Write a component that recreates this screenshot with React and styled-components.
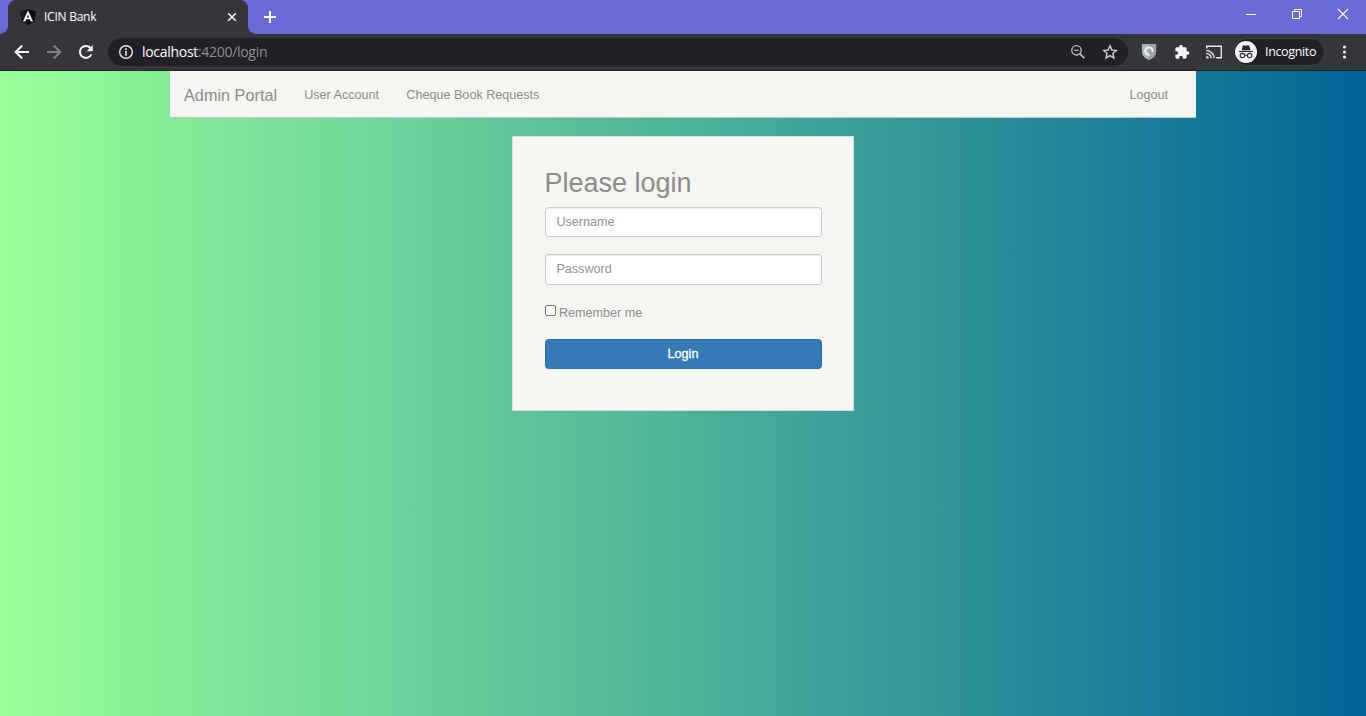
import React from "react";
import styled, { createGlobalStyle } from "styled-components";

const GlobalStyle = createGlobalStyle`
  * { box-sizing: border-box; }
  html, body { margin: 0; height: 100%; overflow: hidden; }
  body { font-family: "Liberation Sans", Arial, sans-serif; }
`;

const Window = styled.div`
  width: 1366px;
  height: 716px;
  display: flex;
  flex-direction: column;
  overflow: hidden;
`;

const TabStrip = styled.header`
  height: 34px;
  flex: none;
  display: flex;
  padding-left: 8px;
  background: #6b69d6;
  font-family: "Open Sans", "Noto Sans", sans-serif;
`;

const Tab = styled.div`
  position: relative;
  width: 240px;
  height: 34px;
  display: flex;
  align-items: center;
  padding: 0 10px 0 12px;
  border-radius: 8px 8px 0 0;
  background: #35363a;
  color: #fff;

  &::before,
  &::after {
    content: "";
    position: absolute;
    bottom: 0;
    width: 8px;
    height: 8px;
  }
  &::before {
    left: -8px;
    background: radial-gradient(circle at 0 0, transparent 7.5px, #35363a 8px);
  }
  &::after {
    right: -8px;
    background: radial-gradient(circle at 100% 0, transparent 7.5px, #35363a 8px);
  }
`;

const TabTitle = styled.span`
  flex: 1;
  margin-left: 8px;
  font-size: 12px;
  line-height: 16px;
  letter-spacing: -0.25px;
`;

const Icon = styled.svg`
  display: block;
  flex: none;
  width: ${(p) => p.$w || 16}px;
  height: ${(p) => p.$h || p.$w || 16}px;
`;

const NewTab = styled.div`
  display: flex;
  align-items: center;
  margin-left: 14px;
`;

const WindowControls = styled.div`
  display: flex;
  margin-left: auto;
`;

const Control = styled.div`
  width: 46px;
  height: 28px;
  display: flex;
  align-items: center;
  justify-content: center;
`;

const Toolbar = styled.div`
  height: 37px;
  flex: none;
  display: flex;
  align-items: center;
  padding: 0 12px 0 14px;
  background: #35363a;
  border-bottom: 1px solid #232326;
  font-family: "Open Sans", "Noto Sans", sans-serif;
`;

const NavIcons = styled.div`
  display: flex;
  gap: 16px;
  width: 94px;
`;

const AddressBar = styled.div`
  width: 1020px;
  height: 28px;
  display: flex;
  align-items: center;
  padding: 0 10px;
  border-radius: 14px;
  background: #202124;
`;

const Url = styled.span`
  flex: 1;
  margin-left: 8px;
  color: #8d9195;
  font-size: 14px;
  line-height: 20px;
  letter-spacing: -0.3px;
`;

const Host = styled.span`
  color: #fff;
`;

const AddressActions = styled.div`
  display: flex;
  gap: 16px;
`;

const Extensions = styled.div`
  display: flex;
  gap: 16.5px;
  margin-left: 13px;
`;

const Profile = styled.div`
  width: 92px;
  height: 28px;
  display: flex;
  align-items: center;
  margin-left: 11px;
  padding-left: 1px;
  border: 1px solid #3e3f43;
  border-radius: 14px;
  background: #202124;
  color: #fff;
  font-size: 12.5px;
  line-height: 16px;
  letter-spacing: -0.35px;
`;

const ProfileName = styled.span`
  margin: 0 0 1px 8px;
`;

const MenuDots = styled.div`
  margin-left: 11px;
`;

const Page = styled.main`
  flex: 1;
  display: flex;
  flex-direction: column;
  align-items: center;
  background: linear-gradient(to right, #99ff99, #006699);
  color: #8c8c8c;
  font-size: 12.6px;
  line-height: 18px;
`;

const Navbar = styled.nav`
  width: 1026px;
  height: 47px;
  display: flex;
  align-items: center;
  padding: 0 28px 0 14px;
  background: #f5f5f1;
  border-bottom: 1px solid #c3bfc4;
`;

const Brand = styled.span`
  margin-right: 27px;
  padding-top: 2px;
  font-size: 16.2px;
  letter-spacing: 0.04px;
`;

const NavLink = styled.span`
  padding-top: 2px;
  margin-right: ${(p) => (p.$last ? 0 : 27.3)}px;
  margin-left: ${(p) => (p.$last ? "auto" : 0)};
`;

const LoginCard = styled.form`
  width: 342px;
  height: 275px;
  margin-top: 18px;
  padding: 31px 31px 0 32px;
  border: 1px solid #d9d9d6;
  background: #f5f5f1;
`;

const Title = styled.h2`
  margin: 0 0 8px -0.5px;
  font-size: 27px;
  font-weight: 400;
  line-height: 31px;
`;

const Field = styled.input`
  display: block;
  width: 277px;
  height: ${(p) => p.$height}px;
  margin: 0 0 17px;
  padding: 0 10.4px ${(p) => p.$lift}px;
  border: 1px solid #c8c8cb;
  border-radius: 3.6px;
  background: #fff;
  box-shadow: inset 0 1px 1px rgba(0, 0, 0, 0.075);
  font: 12.6px/18px "Liberation Sans", Arial, sans-serif;

  &::placeholder {
    color: #919191;
  }
`;

const Remember = styled.label`
  height: 18px;
  display: flex;
  align-items: flex-start;
  margin: 19px 0 17px;
  line-height: 18px;
`;

const Checkbox = styled.input`
  appearance: none;
  width: 11px;
  height: 11px;
  margin: 1px 3px 0 0;
  border: 1px solid #717171;
  border-radius: 2px;
  background: #fff;
`;

const LoginButton = styled.button`
  display: block;
  width: 277px;
  height: 30px;
  padding: 0 1px 1px 0;
  border: 1px solid #2e6da4;
  border-radius: 3.6px;
  background: #337ab7;
  color: #fff;
  font: 12.6px/18px "Liberation Sans", Arial, sans-serif;
  -webkit-text-stroke: 0.3px #fff;
`;

function AngularIcon() {
  return (
    <Icon viewBox="0 0 16 16" $w={16}>
      <path d="M8 0L15.7 2.7L14.5 12.5L8 16L1.5 12.5L.3 2.7Z" fill="#15171f" />
      <path d="M8 0L15.7 2.7L14.5 12.5L8 16Z" fill="#090b12" />
      <path d="M8 1.6L2.9 12.6H5.2L6.1 10.3H9.9L10.8 12.6H13.1Z M8 5.4L9.2 8.4H6.8Z" fill="#fff" fillRule="evenodd" />
    </Icon>
  );
}

function BackIcon() {
  return (
    <Icon viewBox="0 0 16 16" fill="none" stroke="#f1f3f4" strokeWidth="2">
      <path d="M15 8H2.5M8.2 1.5L1.7 8L8.2 14.5" />
    </Icon>
  );
}

function ForwardIcon() {
  return (
    <Icon viewBox="0 0 16 16" fill="none" stroke="#818286" strokeWidth="2">
      <path d="M1 8H13.5M7.8 1.5L14.3 8L7.8 14.5" />
    </Icon>
  );
}

function ReloadIcon() {
  return (
    <Icon viewBox="0 0 16 16">
      <path d="M13.4 10.4A6 6 0 1 1 12.5 4" fill="none" stroke="#f1f3f4" strokeWidth="2" />
      <path d="M14.8 1V7.2H8.6Z" fill="#f1f3f4" />
    </Icon>
  );
}

function InfoIcon() {
  return (
    <Icon viewBox="0 0 16 16">
      <circle cx="8" cy="8" r="6.3" fill="none" stroke="#e8eaed" strokeWidth="1.4" />
      <path d="M7.2 4.3h1.6v1.6H7.2zM7.2 7h1.6v4.7H7.2z" fill="#e8eaed" />
    </Icon>
  );
}

function ZoomOutIcon() {
  return (
    <Icon viewBox="0 0 16 16" fill="none" stroke="#b9bbbe" strokeWidth="1.4">
      <circle cx="6.5" cy="6.3" r="4.7" />
      <path d="M9.8 9.6L14.3 14.1" strokeWidth="1.9" />
      <path d="M4.3 6.3H8.7" strokeWidth="1.2" />
    </Icon>
  );
}

function StarIcon() {
  return (
    <Icon viewBox="0 0 16 16">
      <path d="M8 1.9L9.8 6.1L14.3 6.5L10.9 9.5L11.9 13.9L8 11.6L4.1 13.9L5.1 9.5L1.7 6.5L6.2 6.1Z" fill="none" stroke="#c7c9cc" strokeWidth="1.5" />
    </Icon>
  );
}

function ShieldIcon() {
  return (
    <Icon viewBox="0 0 16 16">
      <path d="M.9 0H15.1V7.5C15.1 11.5 12 14.5 8 16C4 14.5 .9 11.5 .9 7.5Z" fill="#adb1bc" />
      <path d="M8 0H15.1V7.5C15.1 11.5 12 14.5 8 16Z" fill="#9ba1b0" />
      <path d="M8.6 10.6A3.6 3.6 0 1 1 11.4 7.9" fill="none" stroke="#f4f5f7" strokeWidth="2.1" />
    </Icon>
  );
}

function PuzzleIcon() {
  return (
    <Icon viewBox="0 0 24 24" fill="#f1f3f4">
      <path d="M20.5 11H19V7c0-1.1-.9-2-2-2h-4V3.5a2.5 2.5 0 0 0-5 0V5H4c-1.1 0-2 .9-2 2v3.8h1.5a2.7 2.7 0 0 1 0 5.4H2V20c0 1.1.9 2 2 2h3.8v-1.5a2.7 2.7 0 0 1 5.4 0V22H17c1.1 0 2-.9 2-2v-4h1.5a2.5 2.5 0 0 0 0-5z" />
    </Icon>
  );
}

function CastIcon() {
  return (
    <Icon viewBox="0 0 16 16" fill="none" stroke="#e4e5e8" strokeWidth="1.5">
      <path d="M.8 4.5V2.2H15.4V13.8H10" />
      <path d="M.3 6.5A7.8 7.8 0 0 1 8.1 14.3M.3 9.4A4.9 4.9 0 0 1 5.2 14.3" />
      <path d="M.3 11.9V14.5H2.8A2.5 2.5 0 0 0 .3 11.9Z" fill="#e4e5e8" stroke="none" />
    </Icon>
  );
}

function IncognitoIcon() {
  return (
    <Icon viewBox="0 0 22 22" $w={22}>
      <circle cx="11" cy="11" r="11" fill="#f1f3f4" />
      <path d="M6.5 9.2L7.8 4.8Q8 4.1 8.8 4.3L11 4.8L13.2 4.3Q14 4.1 14.2 4.8L15.5 9.2Z" fill="#292a2d" />
      <path d="M4 10.5H18" stroke="#292a2d" strokeWidth="1.1" />
      <g fill="none" stroke="#292a2d" strokeWidth="1.1">
        <circle cx="7.4" cy="14.6" r="2.2" />
        <circle cx="14.6" cy="14.6" r="2.2" />
        <path d="M9.6 14.4Q11 13.7 12.4 14.4" />
      </g>
    </Icon>
  );
}

export default function App() {
  return (
    <Window>
      <GlobalStyle />
      <TabStrip>
        <Tab>
          <AngularIcon />
          <TabTitle>ICIN Bank</TabTitle>
          <Icon viewBox="0 0 12 12" $w={12} stroke="#f1f3f4" strokeWidth="1.6">
            <path d="M2.2 2.2L9.8 9.8M9.8 2.2L2.2 9.8" />
          </Icon>
        </Tab>
        <NewTab>
          <Icon viewBox="0 0 16 16" stroke="#fff" strokeWidth="2">
            <path d="M8 2V14M2 8H14" />
          </Icon>
        </NewTab>
        <WindowControls>
          <Control>
            <Icon viewBox="0 0 12 12" $w={12} stroke="#fff">
              <path d="M1 6.5H11" />
            </Icon>
          </Control>
          <Control>
            <Icon viewBox="0 0 12 12" $w={12} fill="none" stroke="#fff">
              <path d="M1.5 3.5H8.5V10.5H1.5ZM3.5 3.5V1.5H10.5V8.5H8.5" />
            </Icon>
          </Control>
          <Control>
            <Icon viewBox="0 0 12 12" $w={12} stroke="#fff" strokeWidth="1.1">
              <path d="M1 1L11 11M11 1L1 11" />
            </Icon>
          </Control>
        </WindowControls>
      </TabStrip>
      <Toolbar>
        <NavIcons>
          <BackIcon />
          <ForwardIcon />
          <ReloadIcon />
        </NavIcons>
        <AddressBar>
          <InfoIcon />
          <Url>
            <Host>localhost</Host>:4200/login
          </Url>
          <AddressActions>
            <ZoomOutIcon />
            <StarIcon />
          </AddressActions>
        </AddressBar>
        <Extensions>
          <ShieldIcon />
          <PuzzleIcon />
          <CastIcon />
        </Extensions>
        <Profile>
          <IncognitoIcon />
          <ProfileName>Incognito</ProfileName>
        </Profile>
        <MenuDots>
          <Icon viewBox="0 0 16 16" fill="#f1f3f4">
            <circle cx="8.5" cy="3" r="1.6" />
            <circle cx="8.5" cy="8" r="1.6" />
            <circle cx="8.5" cy="13" r="1.6" />
          </Icon>
        </MenuDots>
      </Toolbar>
      <Page>
        <Navbar>
          <Brand>Admin Portal</Brand>
          <NavLink>User Account</NavLink>
          <NavLink>Cheque Book Requests</NavLink>
          <NavLink $last>Logout</NavLink>
        </Navbar>
        <LoginCard>
          <Title>Please login</Title>
          <Field type="text" placeholder="Username" $height={30} $lift={0} />
          <Field type="password" placeholder="Password" $height={31} $lift={2} />
          <Remember>
            <Checkbox type="checkbox" />
            Remember me
          </Remember>
          <LoginButton type="button">Login</LoginButton>
        </LoginCard>
      </Page>
    </Window>
  );
}
